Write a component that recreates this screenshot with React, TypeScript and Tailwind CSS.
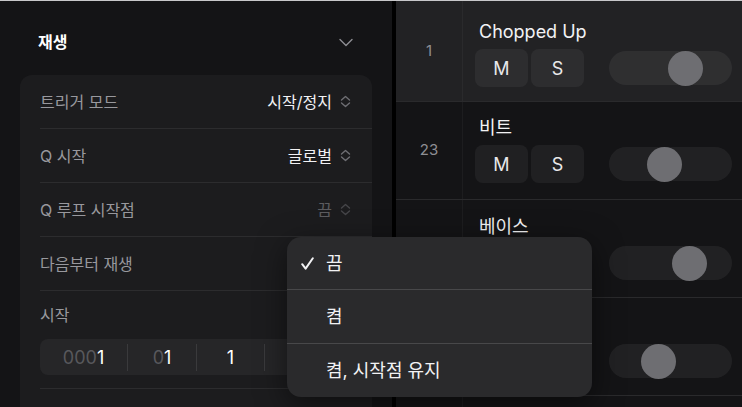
import React from 'react';

type Track = {
  num: string;
  name: string;
  knob: number;
  selected?: boolean;
  h: string;
  pt: string;
};

const tracks: Track[] = [
  { num: '1', name: 'Chopped Up', knob: 59, selected: true, h: 'h-[101px]', pt: 'pt-[20px]' },
  { num: '23', name: '비트', knob: 38, h: 'h-[98px]', pt: 'pt-[15px]' },
  { num: '', name: '베이스', knob: 63, h: 'h-[98px]', pt: 'pt-[16px]' },
  { num: '', name: '키즈', knob: 32, h: 'h-[98px]', pt: 'pt-[16px]' },
];

const UpDown = ({ dim }: { dim?: boolean }) => (
  <svg width="11" height="13" viewBox="0 0 11 13" fill="none" className={dim ? 'opacity-50' : ''}>
    <path d="M1.5 5L5.5 1.5L9.5 5" stroke="#6e6e73" strokeWidth="1.4" strokeLinecap="round" strokeLinejoin="round" />
    <path d="M1.5 8L5.5 11.5L9.5 8" stroke="#6e6e73" strokeWidth="1.4" strokeLinecap="round" strokeLinejoin="round" />
  </svg>
);

const SettingRow = ({ label, value, dim }: { label: string; value?: string; dim?: boolean }) => (
  <div className="h-[54px] flex items-center justify-between border-b border-[#2c2c2e] pr-[21px]">
    <span className="text-[16px] text-[#98989d]">{label}</span>
    {value && (
      <div className="flex items-center gap-[8px]">
        <span className={`text-[16px] ${dim ? 'text-[#5c5c60]' : 'text-[#f2f2f4]'}`}>{value}</span>
        <UpDown dim={dim} />
      </div>
    )}
  </div>
);

export default function App() {
  return (
    <div className="w-[742px] h-[407px] overflow-hidden bg-[#141416] font-[Inter,'Noto_Sans_CJK_KR',sans-serif] flex flex-col relative">
      <div className="h-px bg-[#c8c8ca] shrink-0" />
      <div className="flex flex-1 min-h-0">
        {/* left inspector */}
        <div className="w-[392px] shrink-0 bg-[#141416]">
          <div className="flex justify-between items-start pl-[38px] pr-[39px] pt-[29px] h-[74px]">
            <span className="text-[16px] font-bold text-white leading-[24px]">재생</span>
            <svg width="14" height="9" viewBox="0 0 14 9" fill="none" className="mt-[8px]">
              <path d="M1 1.5L7 7.5L13 1.5" stroke="#8e8e93" strokeWidth="1.4" strokeLinecap="round" strokeLinejoin="round" />
            </svg>
          </div>
          <div className="ml-[20px] w-[352px] rounded-t-[12px] bg-[#1c1c1e] pl-[20px] h-[400px]">
            <SettingRow label="트리거 모드" value="시작/정지" />
            <SettingRow label="Q 시작" value="글로벌" />
            <SettingRow label="Q 루프 시작점" value="끔" dim />
            <SettingRow label="다음부터 재생" />
            <div className="border-b border-[#2c2c2e] pr-[20px] pb-[13px]">
              <div className="h-[48px] flex items-center">
                <span className="text-[16px] text-[#98989d]">시작</span>
              </div>
              <div className="h-[36px] rounded-[8px] bg-[#262628] flex items-center text-[18px]">
                <div className="w-[88px] text-center border-r border-[#3a3a3c]">
                  <span className="text-[#58585c]">000</span>
                  <span className="text-white">1</span>
                </div>
                <div className="w-[69px] text-center border-r border-[#3a3a3c]">
                  <span className="text-[#58585c]">0</span>
                  <span className="text-white">1</span>
                </div>
                <div className="w-[68px] text-center border-r border-[#3a3a3c] text-white">1</div>
                <div className="flex-1 text-center">
                  <span className="text-[#58585c]">00</span>
                  <span className="text-white">1</span>
                </div>
              </div>
            </div>
          </div>
        </div>
        <div className="w-[4px] shrink-0 bg-black" />
        {/* tracks */}
        <div className="flex-1 flex flex-col bg-[#141416]">
          {tracks.map((t, i) => (
            <div
              key={i}
              className={`${t.h} shrink-0 flex border-b border-[#2a2a2c] ${t.selected ? 'bg-[#222224]' : ''}`}
            >
              <div className="w-[67px] shrink-0 border-r border-white/[0.04] flex items-center justify-center text-[15px] text-[#8e8e93]">
                {t.num}
              </div>
              <div className={`pl-[12px] ${t.pt}`}>
                <div className="pl-[4px] h-[22px] leading-[22px] text-[18px] text-[#f2f2f4]">{t.name}</div>
                <div className="flex items-center mt-[6px]">
                  <div className="w-[53px] h-[38px] rounded-[8px] bg-white/[0.05] flex items-center justify-center text-[18px] text-[#e8e8ea]">
                    M
                  </div>
                  <div className="w-[53px] h-[38px] ml-[3px] rounded-[8px] bg-white/[0.05] flex items-center justify-center text-[18px] text-[#e8e8ea]">
                    S
                  </div>
                  <div className="ml-[25px] w-[123px] h-[34px] rounded-full bg-white/[0.06] flex items-center">
                    <div className="w-[35px] h-[35px] rounded-full bg-[#6e6e72]" style={{ marginLeft: t.knob }} />
                  </div>
                </div>
              </div>
            </div>
          ))}
          <div className="flex-1 flex">
            <div className="w-[67px] shrink-0 border-r border-white/[0.04]" />
          </div>
        </div>
      </div>

      {/* popup menu */}
      <div className="absolute left-[287px] top-[237px] w-[305px] h-[160px] rounded-[14px] bg-[#2a2a2c] shadow-[0_8px_30px_rgba(0,0,0,0.5)] flex flex-col text-[18px] text-[#f2f2f4] overflow-hidden">
        <div className="h-[53px] flex items-center border-b border-[#48484a]">
          <div className="w-[39px] flex justify-end pr-[12px]">
            <svg width="13" height="13" viewBox="0 0 13 13" fill="none">
              <path d="M1.2 7.2L4.6 11.6L11.8 1.2" stroke="#f2f2f4" strokeWidth="2" strokeLinecap="round" strokeLinejoin="round" />
            </svg>
          </div>
          <span>끔</span>
        </div>
        <div className="h-[54px] flex items-center border-b border-[#48484a] pl-[39px]">켬</div>
        <div className="flex-1 flex items-center pl-[39px]">켬, 시작점 유지</div>
      </div>
    </div>
  );
}
